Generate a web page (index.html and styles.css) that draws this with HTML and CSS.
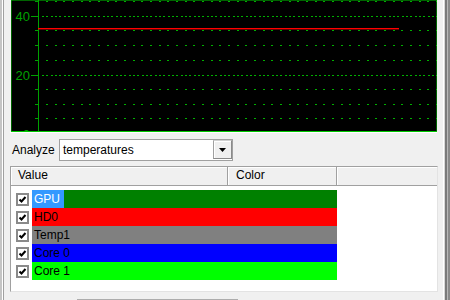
FILE: index.html
```html
<!DOCTYPE html>
<html lang="en">
<head>
    <meta charset="UTF-8">
    <title>Temperature Graph</title>
    <link rel="stylesheet" href="styles.css">
</head>
<body>
    <div class="window">
        <div class="graph">
            <svg width="426" height="132" viewBox="0 0 426 132">
                <rect x="0" y="0" width="426" height="132" fill="#000"/>
                <!-- sparse grid rows -->
                <g stroke="#00b000" stroke-width="1" stroke-dasharray="2 6.667" shape-rendering="crispEdges">
                    <line x1="35" y1="1.5" x2="426" y2="1.5"/>
                    <line x1="35" y1="30.5" x2="426" y2="30.5"/>
                    <line x1="35" y1="45.5" x2="426" y2="45.5"/>
                    <line x1="35" y1="60.5" x2="426" y2="60.5"/>
                    <line x1="35" y1="89.5" x2="426" y2="89.5"/>
                    <line x1="35" y1="104.5" x2="426" y2="104.5"/>
                    <line x1="35" y1="118.5" x2="426" y2="118.5"/>
                </g>
                <!-- major grid rows -->
                <g stroke="#00b000" stroke-width="1" stroke-dasharray="2 2.333" shape-rendering="crispEdges">
                    <line x1="31" y1="16.5" x2="426" y2="16.5"/>
                    <line x1="31" y1="75.5" x2="426" y2="75.5"/>
                </g>
                <!-- axis and ticks -->
                <g stroke="#00a000" stroke-width="1" shape-rendering="crispEdges">
                    <line x1="27.5" y1="0" x2="27.5" y2="131"/>
                    <line x1="20" y1="16.5" x2="27" y2="16.5"/>
                    <line x1="20" y1="75.5" x2="27" y2="75.5"/>
                    <line x1="24" y1="1.5" x2="27" y2="1.5"/>
                    <line x1="24" y1="30.5" x2="27" y2="30.5"/>
                    <line x1="24" y1="45.5" x2="27" y2="45.5"/>
                    <line x1="24" y1="60.5" x2="27" y2="60.5"/>
                    <line x1="24" y1="89.5" x2="27" y2="89.5"/>
                    <line x1="24" y1="104.5" x2="27" y2="104.5"/>
                    <line x1="24" y1="118.5" x2="27" y2="118.5"/>
                </g>
                <g class="axis-label" fill="#00a000" text-anchor="end">
                    <text x="19" y="21">40</text>
                    <text x="19" y="80">20</text>
                    <text x="19" y="139">0</text>
                </g>
                <!-- GPU temperature -->
                <rect x="27" y="28" width="361" height="1.4" fill="#ff0000"/>
                <rect x="0" y="0" width="426" height="132" fill="none" stroke="#00c800" stroke-width="1"/>
                <line x1="0" y1="131.5" x2="426" y2="131.5" stroke="#00c800" stroke-width="1"/>
            </svg>
        </div>

        <div class="analyze">
            <span class="analyze-label">Analyze</span>
            <div class="combo">
                <span class="combo-text">temperatures</span>
                <span class="combo-btn">
                    <svg width="7" height="4" viewBox="0 0 7 4"><path d="M0 0h7L3.5 4z" fill="#000"/></svg>
                </span>
            </div>
        </div>

        <div class="list">
            <div class="list-head">
                <div class="col col-value">Value</div>
                <div class="col col-color">Color</div>
                <div class="col col-rest"></div>
            </div>
            <div class="rows">
                <div class="row">
                    <span class="check"><svg width="13" height="13" viewBox="0 0 13 13"><rect x="1" y="1" width="11" height="11" fill="#fff" stroke="#8a8a8a" stroke-width="2"/><path d="M3.5 6.5l2 2 4-4.5" fill="none" stroke="#000" stroke-width="2"/></svg></span>
                    <span class="bar bar-green"><span class="name selected">GPU</span></span>
                </div>
                <div class="row">
                    <span class="check"><svg width="13" height="13" viewBox="0 0 13 13"><rect x="1" y="1" width="11" height="11" fill="#fff" stroke="#8a8a8a" stroke-width="2"/><path d="M3.5 6.5l2 2 4-4.5" fill="none" stroke="#000" stroke-width="2"/></svg></span>
                    <span class="bar bar-red"><span class="name">HD0</span></span>
                </div>
                <div class="row">
                    <span class="check"><svg width="13" height="13" viewBox="0 0 13 13"><rect x="1" y="1" width="11" height="11" fill="#fff" stroke="#8a8a8a" stroke-width="2"/><path d="M3.5 6.5l2 2 4-4.5" fill="none" stroke="#000" stroke-width="2"/></svg></span>
                    <span class="bar bar-gray"><span class="name">Temp1</span></span>
                </div>
                <div class="row">
                    <span class="check"><svg width="13" height="13" viewBox="0 0 13 13"><rect x="1" y="1" width="11" height="11" fill="#fff" stroke="#8a8a8a" stroke-width="2"/><path d="M3.5 6.5l2 2 4-4.5" fill="none" stroke="#000" stroke-width="2"/></svg></span>
                    <span class="bar bar-blue"><span class="name">Core 0</span></span>
                </div>
                <div class="row">
                    <span class="check"><svg width="13" height="13" viewBox="0 0 13 13"><rect x="1" y="1" width="11" height="11" fill="#fff" stroke="#8a8a8a" stroke-width="2"/><path d="M3.5 6.5l2 2 4-4.5" fill="none" stroke="#000" stroke-width="2"/></svg></span>
                    <span class="bar bar-lime"><span class="name">Core 1</span></span>
                </div>
            </div>
        </div>

        <div class="buttons">
            <div class="btn"></div>
        </div>
    </div>
</body>
</html>
```

FILE: styles.css
```css
body {
    margin: 0;
    padding: 0;
}
.window {
    width: 450px;
    height: 300px;
    overflow: hidden;
    box-sizing: border-box;
    padding: 0 13px 0 11px;
    background: #f0f0f0;
    font-family: "Liberation Sans", Arial, sans-serif;
    font-size: 12px;
    color: #000;
    box-shadow:
        inset 2px 0 0 #c4c4c4,
        inset 3px 0 0 #ffffff,
        inset 4px 0 0 #a0a0a0,
        inset -2px 0 0 #8a8a8a,
        inset -3px 0 0 #b8b8b8,
        inset -5px 0 0 #7a7a7a,
        inset -6px 0 0 #d8d8d8,
        inset -7px 0 0 #ffffff;
}
.graph {
    height: 132px;
    border-bottom: 1px solid #ffffff;
    margin-left: -1px;
    padding-left: 1px;
}
.graph svg {
    display: block;
}
.axis-label {
    font-family: "Liberation Sans", Arial, sans-serif;
    font-size: 13px;
}
.analyze {
    display: flex;
    align-items: center;
    margin-top: 6px;
    height: 22px;
}
.analyze-label {
    width: 48px;
    padding-left: 1px;
    box-sizing: border-box;
}
.combo {
    display: flex;
    align-items: flex-start;
    width: 174px;
    height: 22px;
    box-sizing: border-box;
    border: 1px solid #a0a0a0;
    background: #fff;
    padding-left: 3px;
}
.combo-text {
    line-height: 20px;
}
.combo-btn {
    display: flex;
    align-items: center;
    justify-content: center;
    margin-left: auto;
    width: 19px;
    height: 19px;
    box-sizing: border-box;
    background: #f0f0f0;
    border: 1px solid #8a8a8a;
    border-top-color: #d0d0d0;
    border-left-color: #a0a0a0;
    box-shadow: inset 1px 1px 0 #ffffff;
}
.list {
    margin: 5px 0 0 -1px;
    width: 428px;
    height: 126px;
    box-sizing: border-box;
    border: 1px solid;
    border-color: #a0a0a0 #e3e3e3 #e3e3e3 #a0a0a0;
    background: #fff;
}
.list-head {
    display: flex;
    height: 18px;
    background: #f0f0f0;
    border-bottom: 1px solid #a0a0a0;
}
.col {
    box-sizing: border-box;
    height: 18px;
    line-height: 17px;
    border-right: 1px solid #a0a0a0;
    box-shadow: inset 1px 1px 0 #ffffff;
}
.col-value {
    width: 217px;
    padding-left: 7px;
}
.col-color {
    width: 109px;
    padding-left: 8px;
}
.col-rest {
    flex: 1;
    border-right: none;
}
.rows {
    padding-top: 4px;
}
.row {
    display: flex;
    align-items: center;
    height: 18px;
    padding-left: 5px;
}
.check {
    display: flex;
    width: 13px;
    height: 13px;
}
.bar {
    display: flex;
    align-items: center;
    margin-left: 3px;
    width: 305px;
    height: 18px;
}
.name {
    display: flex;
    align-items: center;
    height: 18px;
    padding: 0 4px 0 2px;
}
.selected {
    background: #3399ff;
    color: #fff;
}
.bar-green {
    background: #008000;
}
.bar-red {
    background: #ff0000;
}
.bar-gray {
    background: #808080;
}
.bar-blue {
    background: #0000ff;
}
.bar-lime {
    background: #00ff00;
}
.buttons {
    margin-top: 7px;
    padding-left: 66px;
}
.btn {
    width: 161px;
    height: 23px;
    box-sizing: border-box;
    border: 1px solid #adadad;
    background: #e1e1e1;
}
```
